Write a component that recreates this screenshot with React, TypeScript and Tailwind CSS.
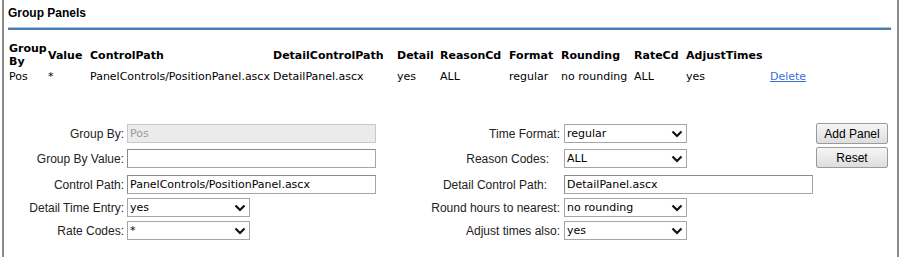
import React from "react";

const cols = [
  { h: <>Group<br />By</>, d: "Pos", w: "w-[39px]" },
  { h: "Value", d: "*", w: "w-[42px]" },
  { h: "ControlPath", d: "PanelControls/PositionPanel.ascx", w: "w-[183px]" },
  { h: "DetailControlPath", d: "DetailPanel.ascx", w: "w-[124px]" },
  { h: "Detail", d: "yes", w: "w-[43px]" },
  { h: "ReasonCd", d: "ALL", w: "w-[69px]" },
  { h: "Format", d: "regular", w: "w-[52px]" },
  { h: "Rounding", d: "no rounding", w: "w-[73px]" },
  { h: "RateCd", d: "ALL", w: "w-[52px]" },
  { h: "AdjustTimes", d: "yes", w: "w-[84px]" },
];

const labelCls =
  "h-[19px] flex items-center justify-end text-[12px] text-[#222] whitespace-nowrap [font-family:'Liberation_Sans',Arial,sans-serif]";

function TextBox({ value, w, disabled }: { value: string; w: string; disabled?: boolean }) {
  return (
    <div
      className={`${w} h-[19px] border flex items-center pl-[2px] pt-[1px] text-[11px] [font-family:'DejaVu_Sans',Verdana,sans-serif] ${
        disabled
          ? "bg-[#ebebeb] text-[#9a9a9a] border-[#c8c8c8]"
          : "bg-white text-black border-[#a6a6a6] border-t-[#8a8a8a] border-l-[#8a8a8a]"
      }`}
    >
      {value}
    </div>
  );
}

function Select({ value }: { value: string }) {
  return (
    <div className="w-[123px] h-[19px] border border-[#a6a6a6] bg-white flex items-center justify-between pl-[2px] pr-[3px] pt-[1px] text-[11px] text-black [font-family:'DejaVu_Sans',Verdana,sans-serif]">
      <span>{value}</span>
      <svg width="12" height="8" viewBox="0 0 12 8">
        <polyline points="1.5,1.5 6,6 10.5,1.5" fill="none" stroke="#111" strokeWidth="2.2" />
      </svg>
    </div>
  );
}

function Button({ label, cls }: { label: string; cls?: string }) {
  return (
    <div
      className={`w-[72px] h-[21px] border border-[#9a9a9a] rounded-[2px] bg-gradient-to-b from-[#f6f6f6] to-[#dddddd] flex items-center justify-center text-[12px] text-black [font-family:'Liberation_Sans',Arial,sans-serif] ${cls ?? ""}`}
    >
      {label}
    </div>
  );
}

export default function App() {
  return (
    <div className="w-[900px] h-[257px] bg-white pl-[2px]">
      <div className="w-[897px] h-[257px] border-l-2 border-r-2 border-[#8c8c8c]">
        <div className="pl-[4px] pt-[6px] h-[20px] leading-[14px] text-[12px] font-bold text-black [font-family:'Liberation_Sans',Arial,sans-serif]">
          Group Panels
        </div>
        <div className="mt-[7px] ml-[4px] w-[883px]">
          <div className="h-[1px] bg-[#a9c2dd]" />
          <div className="h-[2px] bg-[#4a7bb3]" />
        </div>

        <div className="mt-[12px] pl-[4px] text-[11px] text-black [font-family:'DejaVu_Sans',Verdana,sans-serif]">
          <div className="flex h-[26px] items-center leading-[13px] font-bold">
            {cols.map((c, i) => (
              <div key={i} className={`${c.w} shrink-0 pl-[1px]`}>
                {c.h}
              </div>
            ))}
          </div>
          <div className="flex h-[13px] mt-[2px] items-center leading-[13px]">
            {cols.map((c, i) => (
              <div key={i} className={`${c.w} shrink-0 pl-[1px] whitespace-nowrap`}>
                {c.d}
              </div>
            ))}
            <div className="pl-[1px] text-[#3a6fd6] underline">Delete</div>
          </div>
        </div>

        <div className="mt-[41px] grid grid-cols-[123px_249px_188px_252px_72px] grid-rows-[25px_26px_23px_23px_23px] items-start">
          <div className={`${labelCls} pr-[3px]`}>Group By:</div>
          <TextBox value="Pos" w="w-[249px]" disabled />
          <div className={`${labelCls} pr-[4px]`}>Time Format:</div>
          <Select value="regular" />
          <Button label="Add Panel" cls="-mt-[1px]" />

          <div className={`${labelCls} pr-[3px]`}>Group By Value:</div>
          <TextBox value="" w="w-[249px]" />
          <div className={`${labelCls} pr-[15px]`}>Reason Codes:</div>
          <Select value="ALL" />
          <Button label="Reset" cls="-mt-[2px]" />

          <div className={`${labelCls} pr-[3px]`}>Control Path:</div>
          <TextBox value="PanelControls/PositionPanel.ascx" w="w-[249px]" />
          <div className={`${labelCls} pr-[17px]`}>Detail Control Path:</div>
          <TextBox value="DetailPanel.ascx" w="w-[249px]" />
          <div />

          <div className={`${labelCls} pr-[3px]`}>Detail Time Entry:</div>
          <Select value="yes" />
          <div className={`${labelCls} pr-[4px]`}>Round hours to nearest:</div>
          <Select value="no rounding" />
          <div />

          <div className={`${labelCls} pr-[3px]`}>Rate Codes:</div>
          <Select value="*" />
          <div className={`${labelCls} pr-[4px]`}>Adjust times also:</div>
          <Select value="yes" />
          <div />
        </div>
      </div>
    </div>
  );
}
